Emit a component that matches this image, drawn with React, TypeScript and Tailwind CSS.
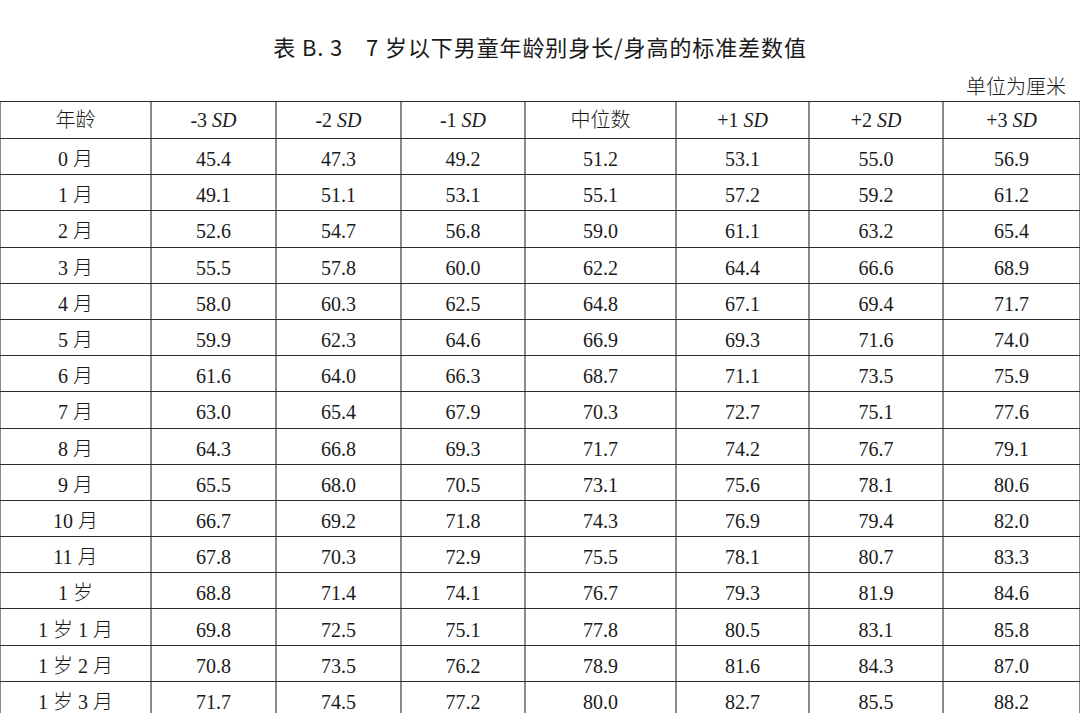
import React from "react";

const rows: [string, string[]][] = [
  ["0 月", ["45.4", "47.3", "49.2", "51.2", "53.1", "55.0", "56.9"]],
  ["1 月", ["49.1", "51.1", "53.1", "55.1", "57.2", "59.2", "61.2"]],
  ["2 月", ["52.6", "54.7", "56.8", "59.0", "61.1", "63.2", "65.4"]],
  ["3 月", ["55.5", "57.8", "60.0", "62.2", "64.4", "66.6", "68.9"]],
  ["4 月", ["58.0", "60.3", "62.5", "64.8", "67.1", "69.4", "71.7"]],
  ["5 月", ["59.9", "62.3", "64.6", "66.9", "69.3", "71.6", "74.0"]],
  ["6 月", ["61.6", "64.0", "66.3", "68.7", "71.1", "73.5", "75.9"]],
  ["7 月", ["63.0", "65.4", "67.9", "70.3", "72.7", "75.1", "77.6"]],
  ["8 月", ["64.3", "66.8", "69.3", "71.7", "74.2", "76.7", "79.1"]],
  ["9 月", ["65.5", "68.0", "70.5", "73.1", "75.6", "78.1", "80.6"]],
  ["10 月", ["66.7", "69.2", "71.8", "74.3", "76.9", "79.4", "82.0"]],
  ["11 月", ["67.8", "70.3", "72.9", "75.5", "78.1", "80.7", "83.3"]],
  ["1 岁", ["68.8", "71.4", "74.1", "76.7", "79.3", "81.9", "84.6"]],
  ["1 岁 1 月", ["69.8", "72.5", "75.1", "77.8", "80.5", "83.1", "85.8"]],
  ["1 岁 2 月", ["70.8", "73.5", "76.2", "78.9", "81.6", "84.3", "87.0"]],
  ["1 岁 3 月", ["71.7", "74.5", "77.2", "80.0", "82.7", "85.5", "88.2"]],
];

const widths = [
  "w-[152px] border-l",
  "w-[125px]",
  "w-[125px]",
  "w-[124px]",
  "w-[151px]",
  "w-[133px]",
  "w-[134px]",
  "w-[137px]",
];

function SD({ sign }: { sign: string }) {
  return (
    <span>
      {sign} <span className="italic">SD</span>
    </span>
  );
}

const header: React.ReactNode[] = [
  "年龄",
  <SD sign="-3" />,
  <SD sign="-2" />,
  <SD sign="-1" />,
  "中位数",
  <SD sign="+1" />,
  <SD sign="+2" />,
  <SD sign="+3" />,
];

export default function App() {
  return (
    <div className="w-[1080px] h-[713px] overflow-hidden bg-white text-[#1a1a1a]">
      <div
        className="pt-[31px] h-[61px] text-center text-[22px] leading-[30px] font-normal whitespace-pre tracking-[0.9px]"
        style={{ fontFamily: '"Noto Sans CJK SC", sans-serif' }}
      >
        {"表 B. 3　7 岁以下男童年龄别身长/身高的标准差数值"}
      </div>
      <div
        className="mt-[15px] h-[20px] leading-[20px] text-right pr-[14px] text-[20px] font-light"
        style={{ fontFamily: '"Noto Sans CJK SC", sans-serif' }}
      >
        单位为厘米
      </div>
      <div
        className="mt-[5px] w-[1081px] border-t border-[#2a2a2a] text-[20px] font-light"
        style={{ fontFamily: '"Liberation Serif", "Noto Sans CJK SC", serif' }}
      >
        <div className="flex h-[37px] border-b border-[#2a2a2a]">
          {header.map((h, i) => (
            <div
              key={i}
              className={`${widths[i]} shrink-0 border-r-2 border-[#8a8a8a] flex items-center justify-center whitespace-pre`}
            >
              {h}
            </div>
          ))}
        </div>
        {rows.map(([age, vals], r) => (
          <div key={r} className="flex h-[36.2px] border-b border-[#2a2a2a]">
            {[age, ...vals].map((v, i) => (
              <div
                key={i}
                className={`${widths[i]} shrink-0 border-r-2 border-[#8a8a8a] flex items-center justify-center pt-[5px] whitespace-pre`}
              >
                {v}
              </div>
            ))}
          </div>
        ))}
      </div>
    </div>
  );
}
